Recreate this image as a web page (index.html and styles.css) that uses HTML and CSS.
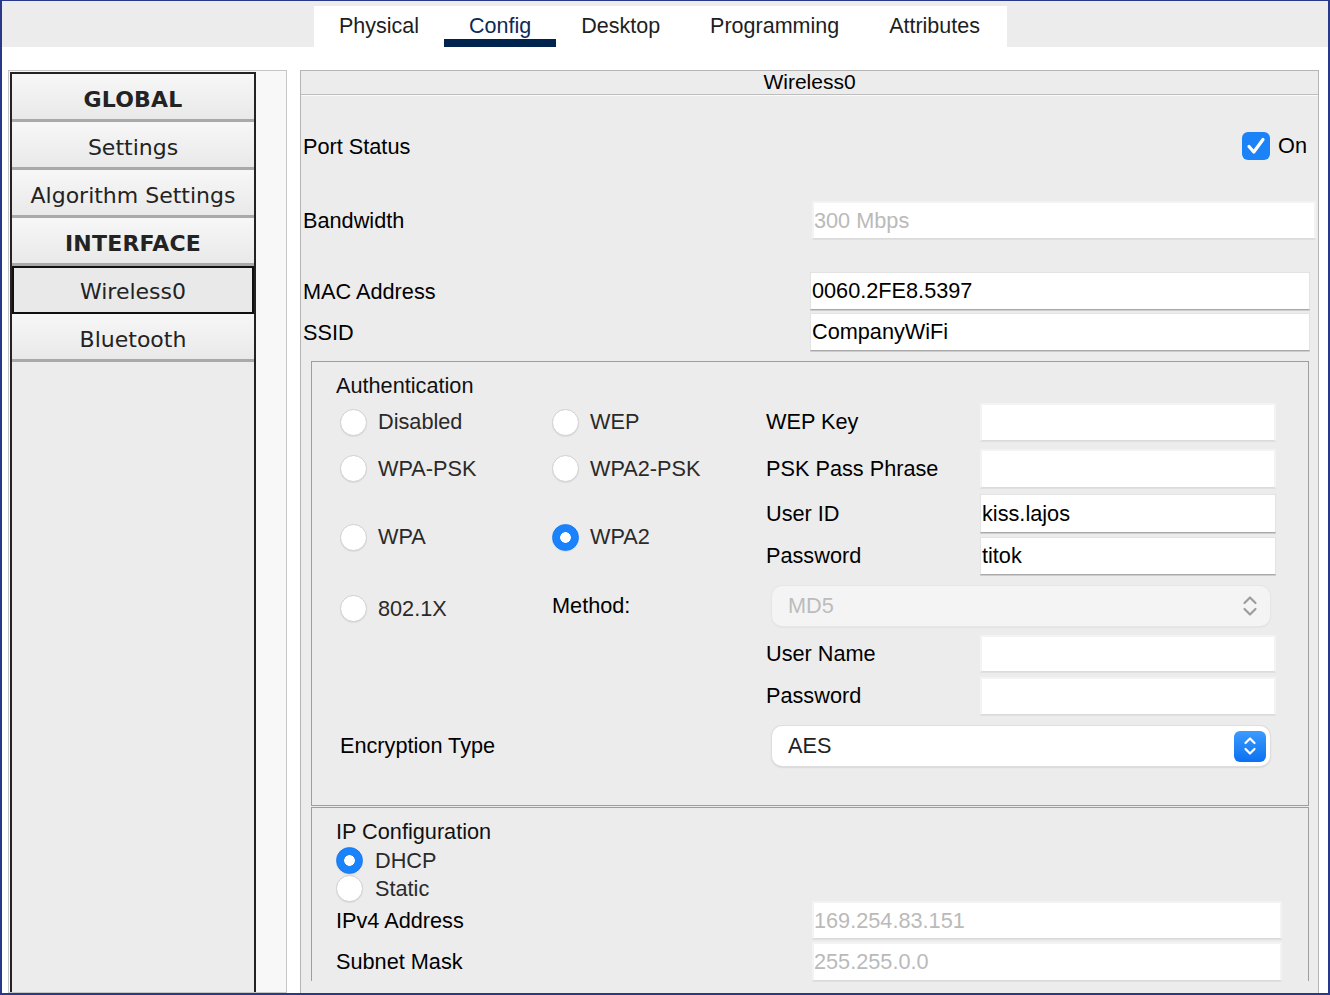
FILE: index.html
```html
<!DOCTYPE html>
<html>
<head>
<meta charset="utf-8">
<title>Wireless0 Config</title>
<link rel="stylesheet" href="styles.css">
</head>
<body>
<div class="window">
  <div class="topbar">
    <div class="tabs">
      <div class="tab">Physical</div>
      <div class="tab active">Config</div>
      <div class="tab">Desktop</div>
      <div class="tab">Programming</div>
      <div class="tab">Attributes</div>
    </div>
  </div>
  <div class="content">
    <aside class="sidebar">
      <div class="navbox">
        <div class="navbtn head">GLOBAL</div>
        <div class="navbtn">Settings</div>
        <div class="navbtn">Algorithm Settings</div>
        <div class="navbtn head">INTERFACE</div>
        <div class="navbtn selected">Wireless0</div>
        <div class="navbtn">Bluetooth</div>
      </div>
    </aside>
    <main class="panel">
      <div class="panel-title">Wireless0</div>

      <div class="row port">
        <div class="label">Port Status</div>
        <div class="toggle">
          <svg class="check" width="28" height="28" viewBox="0 0 28 28"><rect x="0" y="0" width="28" height="28" rx="6" fill="#1c82f8"/><path d="M7 14.5 L11.8 20 L21 7.5" fill="none" stroke="#fff" stroke-width="3.2" stroke-linecap="round" stroke-linejoin="round"/></svg>
          <span>On</span>
        </div>
      </div>

      <div class="row bw">
        <div class="label">Bandwidth</div>
        <div class="field dim wide">300 Mbps</div>
      </div>

      <div class="row mac">
        <div class="label">MAC Address</div>
        <div class="field">0060.2FE8.5397</div>
      </div>

      <div class="row ssid">
        <div class="label">SSID</div>
        <div class="field">CompanyWiFi</div>
      </div>

      <section class="group auth">
        <div class="group-title">Authentication</div>
        <div class="auth-grid">
          <div class="opt c1 r1"><span class="radio"></span><span>Disabled</span></div>
          <div class="opt c2 r1"><span class="radio"></span><span>WEP</span></div>
          <div class="flabel c3 r1 h38">WEP Key</div>
          <div class="field dim c4 r1 h38"></div>

          <div class="opt c1 r2 h39"><span class="radio"></span><span>WPA-PSK</span></div>
          <div class="opt c2 r2 h39"><span class="radio"></span><span>WPA2-PSK</span></div>
          <div class="flabel c3 r2 h39">PSK Pass Phrase</div>
          <div class="field dim c4 r2 h39"></div>

          <div class="opt c1 r34"><span class="radio"></span><span>WPA</span></div>
          <div class="opt c2 r34"><span class="radio on"></span><span>WPA2</span></div>
          <div class="flabel c3 r3 h39">User ID</div>
          <div class="field c4 r3 h39">kiss.lajos</div>
          <div class="flabel c3 r4 h38">Password</div>
          <div class="field c4 r4 h38">titok</div>

          <div class="opt c1 r5 x802"><span class="radio"></span><span>802.1X</span></div>
          <div class="flabel plain c2 r5 h40">Method:</div>
          <div class="select disabled c34 r5">
            <span>MD5</span>
            <svg class="updown" width="16" height="22" viewBox="0 0 16 22"><path d="M2.5 8 L8 2.5 L13.5 8 M2.5 14 L8 19.5 L13.5 14" fill="none" stroke="#9d9d9d" stroke-width="2.2" stroke-linecap="round" stroke-linejoin="round"/></svg>
          </div>

          <div class="flabel c3 r6 h37">User Name</div>
          <div class="field dim c4 r6 h37"></div>
          <div class="flabel c3 r7 h38">Password</div>
          <div class="field dim c4 r7 h38"></div>

          <div class="flabel plain enc c12 r8 h40">Encryption Type</div>
          <div class="select c34 r8">
            <span>AES</span>
            <span class="stepper"><svg width="14" height="20" viewBox="0 0 14 20"><path d="M2.5 7 L7 2.5 L11.5 7 M2.5 13 L7 17.5 L11.5 13" fill="none" stroke="#fff" stroke-width="2.2" stroke-linecap="round" stroke-linejoin="round"/></svg></span>
          </div>
        </div>
      </section>

      <section class="group ipconf">
        <div class="group-title">IP Configuration</div>
        <div class="ip-opt first"><span class="radio on"></span><span>DHCP</span></div>
        <div class="ip-opt"><span class="radio"></span><span>Static</span></div>
        <div class="ip-row ipv4">
          <div class="ip-label">IPv4 Address</div>
          <div class="field dim ipfield">169.254.83.151</div>
        </div>
        <div class="ip-row mask">
          <div class="ip-label">Subnet Mask</div>
          <div class="field dim ipfield">255.255.0.0</div>
        </div>
      </section>
    </main>
  </div>
</div>
</body>
</html>
```

FILE: styles.css
```css
* { box-sizing: border-box; }

html, body {
  margin: 0;
  padding: 0;
  background: #fff;
}

.window {
  width: 1330px;
  height: 995px;
  border-style: solid;
  border-color: #28398c;
  border-width: 1px 2px 2px 2px;
  overflow: hidden;
  background: #fff;
  font-family: "Liberation Sans", Arial, sans-serif;
  font-size: 21.7px;
  color: #000;
}

/* ---------- top tabs ---------- */
.topbar {
  height: 46px;
  background: #ececec;
  padding-top: 5px;
  padding-left: 312px;
}

.tabs {
  display: flex;
  width: 693px;
  height: 41px;
  background: #fff;
  font-size: 21.5px;
}

.tab {
  display: flex;
  align-items: center;
  padding: 0 25px 1px 25px;
  height: 41px;
  color: #1e1e1e;
  white-space: nowrap;
}

.tab.active {
  color: #0c2a57;
  box-shadow: inset 0 -8px 0 #00244e;
}

/* ---------- content ---------- */
.content {
  display: flex;
  margin-top: 23px;
  height: 923px;
}

.sidebar {
  margin-left: 6px;
  width: 279px;
  border: 1px solid #c6c6c6;
  background: #f8f8f8;
  padding: 1px 0 0 1px;
  display: flex;
  flex-direction: column;
}

.navbox {
  width: 246px;
  flex: 1;
  border: 2px solid #232323;
  border-bottom: none;
  background: #ececec;
  font-family: "DejaVu Sans", Verdana, sans-serif;
  font-size: 22px;
  color: #232323;
}

.navbtn {
  height: 48px;
  display: flex;
  align-items: center;
  justify-content: center;
  padding-top: 5px;
  background: linear-gradient(#f7f7f7, #e9e9e9);
  border-bottom: 3px solid #a9a9a9;
  white-space: nowrap;
}

.navbtn.head {
  font-weight: bold;
  letter-spacing: 0.2px;
}

.navbtn.selected {
  border: 2px solid #111;
  background: #e9e9e9;
  padding-top: 2px;
}

/* ---------- main panel ---------- */
.panel {
  margin-left: 13px;
  width: 1019px;
  border: 1px solid #b4b4b4;
  border-bottom: none;
  background: #ececec;
}

.panel-title {
  height: 24px;
  line-height: 22px;
  text-align: center;
  font-size: 21px;
  border-bottom: 1px solid #bdbdbd;
  box-shadow: 0 1px 0 #fafafa;
}

.row {
  display: flex;
  align-items: center;
  padding-left: 2px;
}

.row .label {
  width: 507px;
  white-space: nowrap;
  padding-top: 1px;
}

.row.port {
  margin-top: 26px;
  height: 50px;
}

.toggle {
  margin-left: auto;
  margin-right: 11px;
  display: flex;
  align-items: center;
  gap: 8px;
}

.check { display: block; }

.row.bw {
  margin-top: 30px;
  height: 38px;
}

.row.mac {
  margin-top: 33px;
  height: 38px;
}

.row.ssid {
  margin-top: 3px;
  height: 38px;
}

/* ---------- fields ---------- */
.field {
  height: 38px;
  width: 500px;
  background: #fff;
  border: 1px solid #e3e3e3;
  border-bottom: 1px solid #a9a9a9;
  box-shadow: 0 1px 0 #cdcdcd;
  padding-left: 1px;
  display: flex;
  align-items: center;
  color: #000;
  white-space: nowrap;
}

.field.dim {
  border: 2px solid #f3f3f3;
  border-bottom: 1px solid #dadada;
  box-shadow: 0 1px 0 #e0e0e0;
  color: #bababa;
  padding-left: 0;
}

.field.wide {
  margin-left: 2px;
  width: 504px;
}

/* ---------- groups ---------- */
.group {
  margin: 10px 9px 0 10px;
  border: 1px solid #9e9e9e;
  padding: 11px 0 39px 24px;
}

.group-title {
  height: 26px;
  line-height: 26px;
  color: #111;
}

.auth-grid {
  margin-top: 4px;
  display: grid;
  grid-template-columns: 216px 214px 214px 296px;
  grid-template-rows: 46px 45px 43px 49px 49px 42px 49px 40px;
  align-items: start;
}

.c1 { grid-column: 1; }
.c2 { grid-column: 2; }
.c3 { grid-column: 3; }
.c4 { grid-column: 4; width: 296px; }
.c12 { grid-column: 1 / span 2; }
.c34 { grid-column: 3 / span 2; }
.r1 { grid-row: 1; }
.r2 { grid-row: 2; }
.r3 { grid-row: 3; }
.r4 { grid-row: 4; }
.r34 { grid-row: 3 / span 2; }
.r5 { grid-row: 5; }
.r6 { grid-row: 6; }
.r7 { grid-row: 7; }
.r8 { grid-row: 8; }

.h37 { height: 37px; }
.h38 { height: 38px; }
.h39 { height: 39px; }
.h40 { height: 40px; }

.opt {
  display: flex;
  align-items: center;
  gap: 11px;
  height: 38px;
  color: #2a2a2a;
  white-space: nowrap;
}

.opt.c1 { padding-left: 4px; }
.opt.h39 { height: 39px; }
.opt.r34 { height: 86px; }
.opt.x802 { height: 40px; padding-top: 5px; }

.radio {
  display: inline-block;
  flex: none;
  width: 27px;
  height: 27px;
  border-radius: 50%;
  background: #fff;
  border: 1px solid #d0d0d0;
  box-shadow: 0 1px 1px rgba(0, 0, 0, 0.07);
}

.radio.on {
  border-color: #1479f2;
  background: radial-gradient(circle, #fff 0 5px, #1a82fb 5.6px);
}

.flabel {
  display: flex;
  align-items: center;
  white-space: nowrap;
}

.flabel.enc { padding-left: 4px; }

.select {
  margin-left: 6px;
  width: 498px;
  height: 40px;
  border-radius: 10px;
  display: flex;
  align-items: center;
  justify-content: space-between;
  padding: 0 4px 0 16px;
  background: #fff;
  color: #222;
  box-shadow: 0 0 0 1px #dedede, 0 1px 2px rgba(0, 0, 0, 0.28);
}

.select.disabled {
  background: #f4f4f4;
  color: #bcbcbc;
  padding-right: 12px;
  box-shadow: 0 0 0 1px #e6e6e6, 0 1px 2px rgba(0, 0, 0, 0.12);
}

.updown { display: block; }

.stepper {
  width: 32px;
  height: 31px;
  border-radius: 6px;
  background: linear-gradient(#3c9bfd, #0b71f1);
  display: flex;
  align-items: center;
  justify-content: center;
}

.stepper svg { display: block; }

/* ---------- IP configuration ---------- */
.ipconf {
  margin-top: 1px;
  border-bottom: none;
  padding-top: 11px;
  padding-bottom: 0;
}

.ip-opt {
  display: flex;
  align-items: center;
  gap: 12px;
  height: 27px;
  margin-top: 1px;
  color: #2a2a2a;
}

.ip-opt.first { margin-top: 2px; }

.ip-row {
  display: flex;
  align-items: center;
}

.ip-row.ipv4 {
  margin-top: -1px;
  height: 38px;
}

.ip-row.mask {
  margin-top: 3px;
  height: 39px;
}

.ip-label {
  width: 476px;
  padding-top: 1px;
  white-space: nowrap;
}

.ipfield {
  width: 470px;
  height: 100%;
}
```
